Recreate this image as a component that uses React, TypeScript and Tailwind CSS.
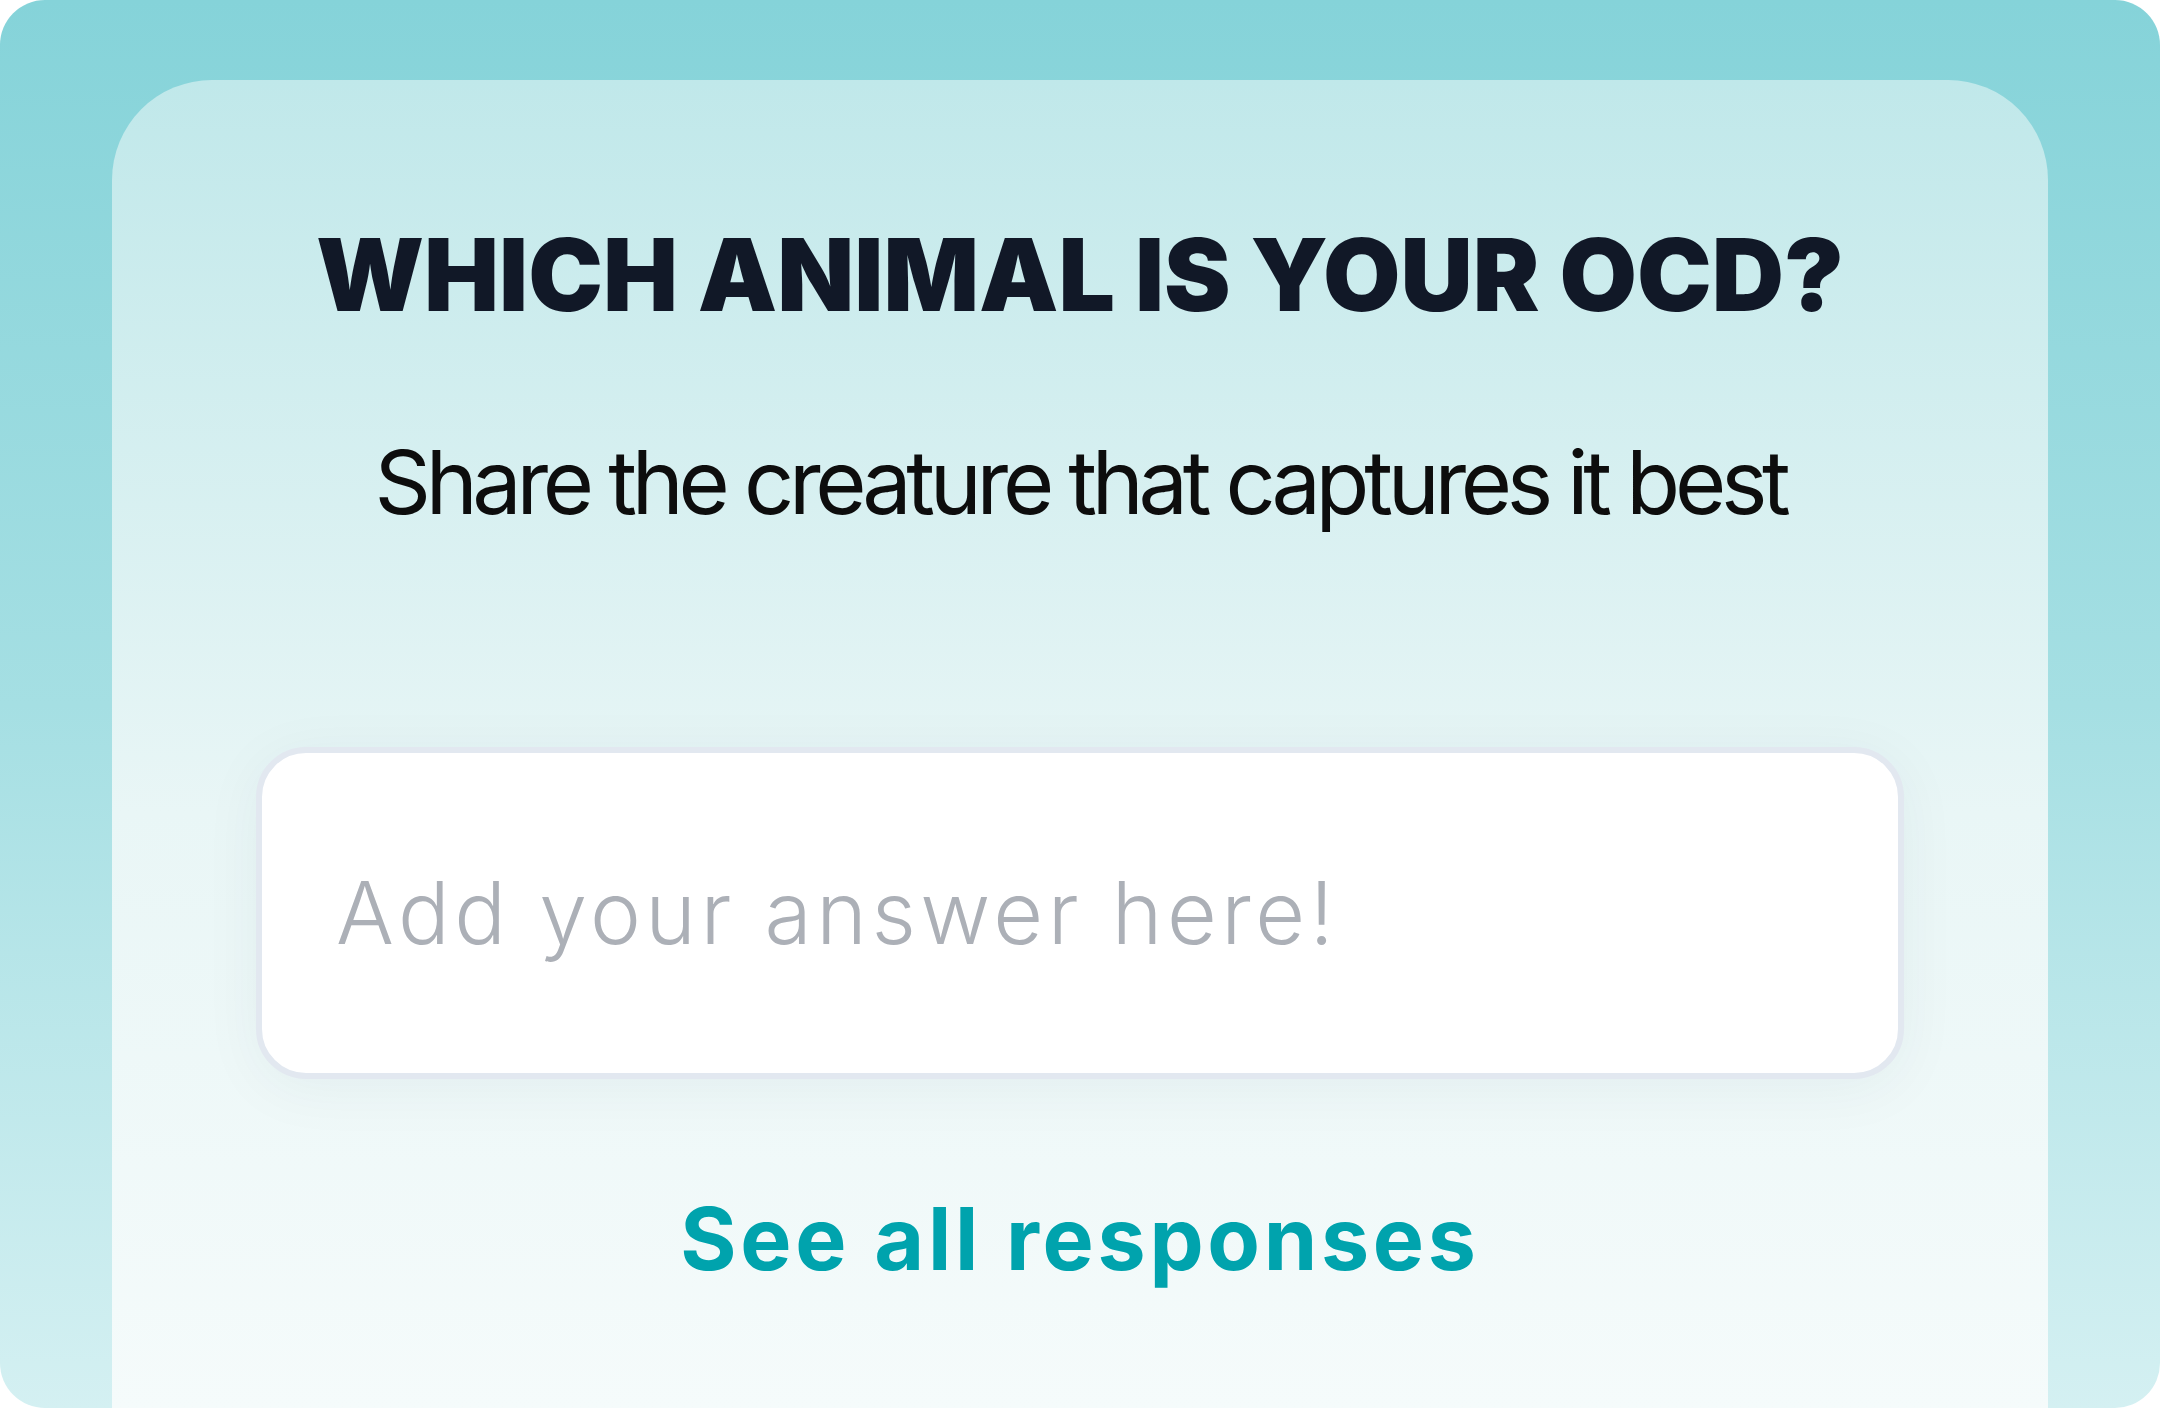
export default function App() {
  return (
    <div className="h-[1408px] w-[2160px] overflow-hidden bg-white">
      <div className="flex h-full w-full flex-col rounded-[45px] bg-gradient-to-b from-[#85d3d9] via-[#a5dfe3] to-[#d4f0f2] px-[112px] pt-[80px]">
        <div
          className="flex flex-1 flex-col items-center rounded-t-[100px] bg-gradient-to-b from-[#c0e8ea] via-[#e9f6f6] via-55% to-[#f5fbfb]"
          style={{ fontFamily: "Inter, 'Liberation Sans', sans-serif" }}
        >
          <h1 className="mt-[140px] text-[100px] leading-[110px] font-black tracking-[0px] text-[#111827]">
            WHICH ANIMAL IS YOUR OCD?
          </h1>
          <p className="mt-[102px] text-[88px] leading-[100px] font-normal tracking-[-5.3px] text-[#0d0d0d]">
            Share the creature that captures it best
          </p>
          <div className="mt-[215px] flex h-[332px] w-[1648px] items-center rounded-[50px] border-[6px] border-[#e2e8f0] bg-white pl-[74px] shadow-[0_10px_60px_rgba(15,60,70,0.05)]">
            <span className="text-[86px] font-light tracking-[4.5px] text-[#acb0b7]">
              Add your answer here!
            </span>
          </div>
          <a className="mt-[110px] text-[86px] leading-[100px] font-bold tracking-[3.7px] text-[#00a3ad]">
            See all responses
          </a>
        </div>
      </div>
    </div>
  );
}
